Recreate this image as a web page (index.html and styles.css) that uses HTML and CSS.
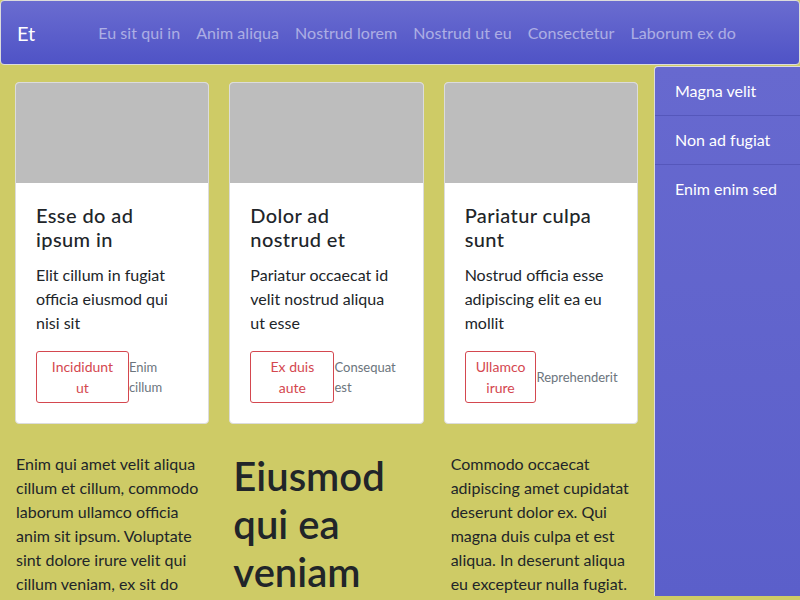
FILE: index.html
```html
<!DOCTYPE html>
<html lang="en">
<head>
<meta charset="utf-8">
<title>Et</title>
<link rel="stylesheet" href="styles.css">
</head>
<body>
<nav class="navbar">
  <a class="brand" href="#">Et</a>
  <ul class="nav-links">
    <li><a href="#">Eu sit qui in</a></li>
    <li><a href="#">Anim aliqua</a></li>
    <li><a href="#">Nostrud lorem</a></li>
    <li><a href="#">Nostrud ut eu</a></li>
    <li><a href="#">Consectetur</a></li>
    <li><a href="#">Laborum ex do</a></li>
  </ul>
</nav>
<div class="layout">
  <main class="main">
    <div class="cards">
      <div class="card">
        <div class="card-img"></div>
        <div class="card-body">
          <h5 class="card-title">Esse do ad ipsum in</h5>
          <p class="card-text">Elit cillum in fugiat officia eiusmod qui nisi sit</p>
          <div class="card-actions">
            <button class="btn">Incididunt ut</button>
            <small class="muted">Enim cillum</small>
          </div>
        </div>
      </div>
      <div class="card">
        <div class="card-img"></div>
        <div class="card-body">
          <h5 class="card-title">Dolor ad nostrud et</h5>
          <p class="card-text">Pariatur occaecat id velit nostrud aliqua ut esse</p>
          <div class="card-actions">
            <button class="btn">Ex duis aute</button>
            <small class="muted">Consequat est</small>
          </div>
        </div>
      </div>
      <div class="card">
        <div class="card-img"></div>
        <div class="card-body">
          <h5 class="card-title">Pariatur culpa sunt</h5>
          <p class="card-text">Nostrud officia esse adipiscing elit ea eu mollit</p>
          <div class="card-actions">
            <button class="btn">Ullamco irure</button>
            <small class="muted">Reprehenderit</small>
          </div>
        </div>
      </div>
    </div>
    <div class="columns">
      <p>Enim qui amet velit aliqua cillum et cillum, commodo laborum ullamco officia anim sit ipsum. Voluptate sint dolore irure velit qui cillum veniam, ex sit do</p>
      <h1>Eiusmod qui ea veniam</h1>
      <p>Commodo occaecat adipiscing amet cupidatat deserunt dolor ex. Qui magna duis culpa et est aliqua. In deserunt aliqua eu excepteur nulla fugiat.</p>
    </div>
  </main>
  <aside class="sidebar">
    <a href="#" class="side-item">Magna velit</a>
    <a href="#" class="side-item">Non ad fugiat</a>
    <a href="#" class="side-item">Enim enim sed</a>
  </aside>
</div>
</body>
</html>
```
FILE: styles.css
```css
* { box-sizing: border-box; }
html, body { margin: 0; padding: 0; }
body {
  font-family: "Lato", "Noto Sans", sans-serif;
  font-size: 16px;
  line-height: 1.5;
  color: #212529;
  background: #cecb66;
}
a { text-decoration: none; }

.navbar {
  display: flex;
  align-items: center;
  height: 65px;
  padding: 0 16px;
  border: 1px solid #dcdcdc;
  border-radius: 4px;
  background: linear-gradient(#6a6cd0, #4f53c6);
}
.brand {
  color: #fff;
  font-size: 20px;
  line-height: 30px;
  margin-right: 55px;
}
.nav-links {
  display: flex;
  list-style: none;
  margin: 0;
  padding: 0;
}
.nav-links a {
  display: block;
  padding: 8px;
  color: rgba(255, 255, 255, 0.5);
  letter-spacing: 0.06px;
}

.layout {
  display: flex;
  align-items: stretch;
}
.main {
  flex: 1;
  padding: 17px 16px 0 15px;
}
.cards {
  display: grid;
  grid-template-columns: repeat(3, 1fr);
  gap: 20px;
}
.card {
  background: #fff;
  border: 1px solid #dcdcdc;
  border-radius: 4px;
  overflow: hidden;
}
.card-img {
  height: 100px;
  background: #bdbdbd;
}
.card-body {
  padding: 20px;
}
.card-title {
  margin: 0 0 12px;
  font-size: 20px;
  font-weight: 500;
  line-height: 1.2;
  letter-spacing: 0.4px;
}
.card-text {
  margin: 0 0 16px;
}
.card-actions {
  display: flex;
  align-items: center;
}
.btn {
  font-family: inherit;
  font-size: 14px;
  line-height: 1.5;
  padding: 4px 10px;
  background: transparent;
  color: #d4474f;
  border: 1px solid #d4474f;
  border-radius: 3px;
}
.muted {
  font-size: 13px;
  line-height: 20px;
  color: #6c757d;
}

.columns {
  display: grid;
  grid-template-columns: repeat(3, 1fr);
  gap: 30px;
  margin-top: 28px;
  padding-left: 1px;
}
.columns p {
  margin: 0;
}
.columns h1 {
  margin: 0;
  font-size: 40px;
  font-weight: 600;
  line-height: 1.2;
}

.sidebar {
  width: 146px;
  flex-shrink: 0;
  margin-top: 1px;
  border-top: 1px solid #dcdcdc;
  border-left: 1px solid #dcdcdc;
  border-top-left-radius: 4px;
  background: linear-gradient(#6769cf, #5b5fca);
}
.side-item {
  display: block;
  padding: 12px 20px;
  color: #fff;
  border-bottom: 1px solid #5557bb;
}
.side-item:last-child { border-bottom: none; }
```
